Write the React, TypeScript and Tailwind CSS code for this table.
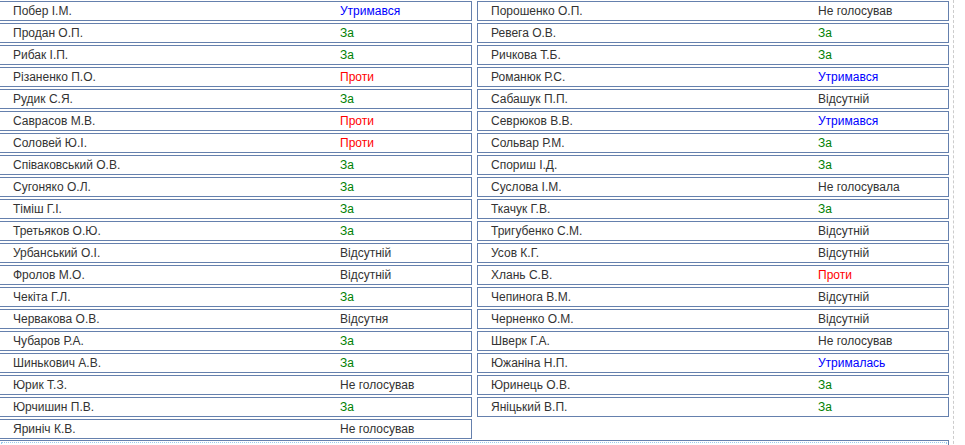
import React from "react";

type Vote = "За" | "Проти" | "Утримався" | "Утрималась" | "Відсутній" | "Відсутня" | "Не голосував" | "Не голосувала";

const LEFT: [string, Vote][] = [
  ["Побер І.М.", "Утримався"],
  ["Продан О.П.", "За"],
  ["Рибак І.П.", "За"],
  ["Різаненко П.О.", "Проти"],
  ["Рудик С.Я.", "За"],
  ["Саврасов М.В.", "Проти"],
  ["Соловей Ю.І.", "Проти"],
  ["Співаковський О.В.", "За"],
  ["Сугоняко О.Л.", "За"],
  ["Тіміш Г.І.", "За"],
  ["Третьяков О.Ю.", "За"],
  ["Урбанський О.І.", "Відсутній"],
  ["Фролов М.О.", "Відсутній"],
  ["Чекіта Г.Л.", "За"],
  ["Червакова О.В.", "Відсутня"],
  ["Чубаров Р.А.", "За"],
  ["Шинькович А.В.", "За"],
  ["Юрик Т.З.", "Не голосував"],
  ["Юрчишин П.В.", "За"],
  ["Яриніч К.В.", "Не голосував"],
];

const RIGHT: [string, Vote][] = [
  ["Порошенко О.П.", "Не голосував"],
  ["Ревега О.В.", "За"],
  ["Ричкова Т.Б.", "За"],
  ["Романюк Р.С.", "Утримався"],
  ["Сабашук П.П.", "Відсутній"],
  ["Севрюков В.В.", "Утримався"],
  ["Сольвар Р.М.", "За"],
  ["Спориш І.Д.", "За"],
  ["Суслова І.М.", "Не голосувала"],
  ["Ткачук Г.В.", "За"],
  ["Тригубенко С.М.", "Відсутній"],
  ["Усов К.Г.", "Відсутній"],
  ["Хлань С.В.", "Проти"],
  ["Чепинога В.М.", "Відсутній"],
  ["Черненко О.М.", "Відсутній"],
  ["Шверк Г.А.", "Не голосував"],
  ["Южаніна Н.П.", "Утрималась"],
  ["Юринець О.В.", "За"],
  ["Яніцький В.П.", "За"],
];

function voteColor(v: Vote) {
  if (v === "За") return "text-[#008000]";
  if (v === "Проти") return "text-[#ff0000]";
  if (v === "Утримався" || v === "Утрималась") return "text-[#0000ff]";
  return "text-[#333333]";
}

function Row({ name, vote }: { name: string; vote: Vote }) {
  return (
    <div className="h-[20px] border border-[#6580ad] flex items-center pl-[13px]">
      <span className="w-[327px] shrink-0 text-[#333333]">{name}</span>
      <span className={voteColor(vote)}>{vote}</span>
    </div>
  );
}

export default function App() {
  return (
    <div className="w-[954px] min-h-[445px] bg-white border-r border-dashed border-[#cccccc] overflow-hidden font-['Liberation_Sans',Arial,sans-serif] text-[12px] leading-[18px]">
      <div className="flex gap-[5px] -ml-px pt-px">
        <div className="w-[473px] flex flex-col gap-[2px]">
          {LEFT.map(([n, v]) => (
            <Row key={n} name={n} vote={v} />
          ))}
        </div>
        <div className="w-[472px] flex flex-col gap-[2px]">
          {RIGHT.map(([n, v]) => (
            <Row key={n} name={n} vote={v} />
          ))}
        </div>
      </div>
      {/* next block, mostly below the fold */}
      <div className="mt-[1px] -ml-px w-[950px] border border-[#6580ad] p-px">
        <div className="h-[40px] border border-dotted border-[#99ccee]" />
      </div>
    </div>
  );
}
